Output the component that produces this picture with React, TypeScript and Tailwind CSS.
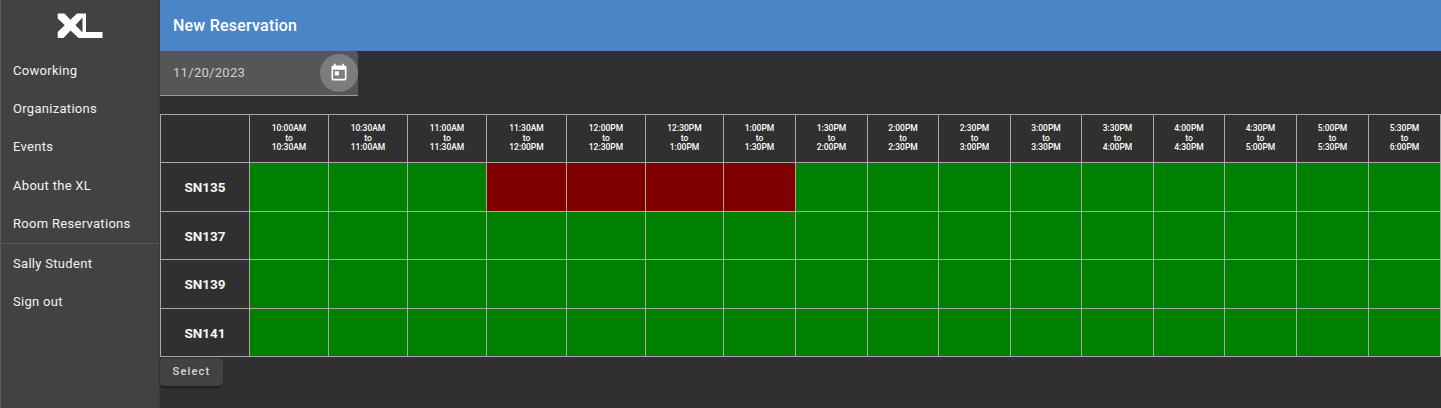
const SLOTS = [
  ['10:00AM', '10:30AM', 'w-[79px]'],
  ['10:30AM', '11:00AM', 'w-[79px]'],
  ['11:00AM', '11:30AM', 'w-[79px]'],
  ['11:30AM', '12:00PM', 'w-[80px]'],
  ['12:00PM', '12:30PM', 'w-[79px]'],
  ['12:30PM', '1:00PM', 'w-[78px]'],
  ['1:00PM', '1:30PM', 'w-[72px]'],
  ['1:30PM', '2:00PM', 'w-[72px]'],
  ['2:00PM', '2:30PM', 'w-[71px]'],
  ['2:30PM', '3:00PM', 'w-[72px]'],
  ['3:00PM', '3:30PM', 'w-[71px]'],
  ['3:30PM', '4:00PM', 'w-[72px]'],
  ['4:00PM', '4:30PM', 'w-[71px]'],
  ['4:30PM', '5:00PM', 'w-[72px]'],
  ['5:00PM', '5:30PM', 'w-[72px]'],
  ['5:30PM', '6:00PM', 'w-[72px]'],
]

const ROOMS = [
  { name: 'SN135', taken: [3, 4, 5, 6], height: 'h-[49px]' },
  { name: 'SN137', taken: [], height: 'h-[48px]' },
  { name: 'SN139', taken: [], height: 'h-[49px]' },
  { name: 'SN141', taken: [], height: 'h-[48px]' },
]

const NAV_TOP = ['Coworking', 'Organizations', 'Events', 'About the XL', 'Room Reservations']
const NAV_BOTTOM = ['Sally Student', 'Sign out']

function XlLogo() {
  return (
    <svg width="46" height="26" viewBox="0 0 46 26" fill="#fff" aria-hidden="true">
      {/* stroke from top left into the foot of the L */}
      <path d="M0.700 0.500H7.500L25 19H45.500V25H21.500L0.700 5.500Z" />
      {/* stroke from bottom left up into the L stem */}
      <path d="M0.700 19L20 0.500H29V19H25.500V4.500L6.500 25H0.700Z" />
    </svg>
  )
}

function TodayIcon() {
  return (
    <svg width="20" height="20" viewBox="0 0 24 24" fill="#fff" aria-hidden="true">
      <path d="M19 3h-1V1h-2v2H8V1H6v2H5c-1.110 0-1.990.900-1.990 2L3 19c0 1.100.890 2 2 2h14c1.100 0 2-.900 2-2V5c0-1.100-.900-2-2-2zm0 16H5V8h14v11zM7 10h5v5H7z" />
    </svg>
  )
}

function NavItem({ label }: { label: string }) {
  return (
    <a className="flex h-[38.4px] items-center pl-[12px] text-[13px] leading-none tracking-[0.3px] text-[#f2f2f2]">
      {label}
    </a>
  )
}

export default function App() {
  return (
    <div className="flex h-[408px] w-[1441px] overflow-hidden bg-[#303030] font-['Roboto',sans-serif] text-white">
      <aside className="flex h-full w-[160px] shrink-0 flex-col border-r border-l border-r-[#383838] border-l-[#5a5a5a] bg-[#424242]">
        <div className="flex h-[51px] shrink-0 items-center justify-center pr-[1px]">
          <XlLogo />
        </div>
        <nav className="flex flex-col">
          {NAV_TOP.map(label => <NavItem key={label} label={label} />)}
        </nav>
        <div className="border-t border-[#555555]">
          {NAV_BOTTOM.map(label => <NavItem key={label} label={label} />)}
        </div>
      </aside>

      <main className="flex min-w-0 flex-1 flex-col">
        <header className="flex h-[51px] shrink-0 items-center bg-[#4a85c7] pl-[13px] text-base font-medium tracking-[0.22px]">
          New Reservation
        </header>

        <div className="flex h-[45px] w-[198px] items-center justify-between rounded-tr-[4px] border-b border-[#9a9a9a] bg-[#565656] pl-[13px] text-[13px] tracking-[0.3px] text-[#d0d0d0]">
          <span>11/20/2023</span>
          <span className="flex h-[38px] w-[38px] items-center justify-center rounded-full bg-[#7c7c7c]">
            <TodayIcon />
          </span>
        </div>

        <table className="mt-[18px] w-[1281px] table-fixed border-collapse">
          <thead>
            <tr className="h-[48px]">
              <th className="w-[89px] border border-[#a8a8a8]" />
              {SLOTS.map(([from, to, width]) => (
                <th key={from} className={`${width} border border-[#a8a8a8] text-[8.500px] leading-[9.500px] font-medium text-white`}>
                  {from}<br />to<br />{to}
                </th>
              ))}
            </tr>
          </thead>
          <tbody>
            {ROOMS.map(room => (
              <tr key={room.name} className={room.height}>
                <th className="border border-[#a8a8a8] pt-[1px] text-[13.500px] font-bold text-[#f5f5f5]">{room.name}</th>
                {SLOTS.map(([from], i) => (
                  <td
                    key={from}
                    className={`border border-[#a8a8a8] ${room.taken.includes(i) ? 'bg-[#800000]' : 'bg-[#008000]'}`}
                  />
                ))}
              </tr>
            ))}
          </tbody>
        </table>

        <button className="mt-[1px] h-[28px] w-[63px] rounded-[4px] bg-[#424242] text-[11px] font-medium tracking-[1.2px] text-[#d8d8d8] shadow-[0_2px_2px_rgba(0,0,0,0.35)]">
          Select
        </button>
      </main>
    </div>
  )
}
